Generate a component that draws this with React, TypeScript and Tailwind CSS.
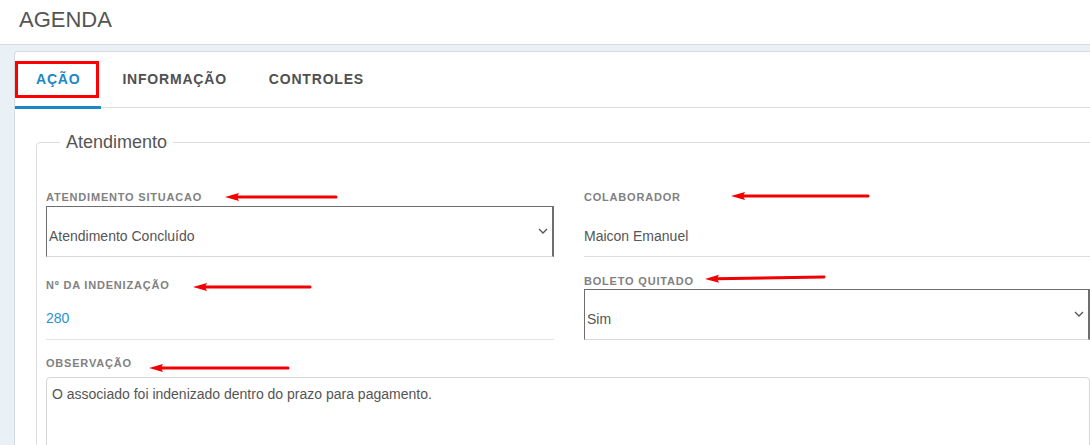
import React from "react";

// red annotation arrow pointing left
const ArrowMark = ({ width, className }: { width: number; className: string }) => (
  <svg width={width} height={10} viewBox={`0 0 ${width} 10`} className={`absolute ${className}`}>
    <polygon points="0,5 14,1 12,5 14,9" fill="#f00000" />
    <line x1={11} y1={5} x2={width - 2} y2={5} stroke="#f00000" strokeWidth={3} strokeLinecap="round" />
  </svg>
);

const Label = ({ children, className = "" }: { children: React.ReactNode; className?: string }) => (
  <div className={`text-[11px] leading-[14px] font-bold tracking-[0.8px] text-[#818181] uppercase ${className}`}>
    {children}
  </div>
);

const Chevron = () => (
  <svg width={10} height={6} viewBox="0 0 10 6" className="shrink-0">
    <polyline points="1,1 5,5 9,1" fill="none" stroke="#555" strokeWidth={1.3} />
  </svg>
);

const SelectBox = ({ value, className = "" }: { value: string; className?: string }) => (
  <div
    className={`h-[51px] flex justify-between items-start border-t border-l border-r-2 border-b border-[#6e6e6e] border-b-[#d9d9d9] pl-[2px] pr-[4px] ${className}`}
  >
    <span className="pt-[21px] text-[14px] leading-[16px] text-[#555]">{value}</span>
    <span className="self-center mt-[-2px]">
      <Chevron />
    </span>
  </div>
);

export default function App() {
  const tabs = ["AÇÃO", "INFORMAÇÃO", "CONTROLES"];

  return (
    <div className="relative w-[1090px] h-[445px] overflow-hidden bg-[#e9f1f7] font-['Liberation_Sans',Arial,sans-serif]">
      {/* Page title */}
      <header className="h-[45px] bg-white border-b border-[#d9dcde] pl-[19px] pt-[8px]">
        <h1 className="text-[22px] leading-[24px] text-[#555]">AGENDA</h1>
      </header>

      {/* Card */}
      <div className="ml-[14px] mt-[6px] w-[1100px] h-[400px] bg-white border-l border-t border-[#d3dbe1] rounded-tl-[4px]">
        {/* Tabs */}
        <div className="flex h-[56px] border-b border-[#dddddd]">
          {tabs.map((tab, idx) => (
            <div
              key={tab}
              className={
                idx === 0
                  ? "relative h-[57px] -mb-px px-[21px] flex items-center border-b-[3px] border-[#1b87c9] text-[#1b87c9] text-[14px] font-bold tracking-[0.8px]"
                  : "h-[56px] px-[21px] pb-[1px] flex items-center text-[#505050] text-[14px] font-bold tracking-[0.8px]"
              }
            >
              {tab}
              {idx === 0 && (
                <div className="absolute left-0 top-[9px] w-[84px] h-[37px] border-[3px] border-[#ff0000]" />
              )}
            </div>
          ))}
        </div>

        {/* Atendimento */}
        <fieldset className="ml-[21px] mt-[24px] w-[1080px] border border-[#dddddd] rounded-[4px] px-[9px] pb-4">
          <legend className="ml-[14px] px-[6px] text-[18px] leading-[20px] text-[#555]">Atendimento</legend>

          <div className="pt-[38px] grid grid-cols-[508px_506px] gap-x-[30px]">
            <div>
              <Label>ATENDIMENTO SITUACAO</Label>
              <SelectBox className="mt-[2px]" value="Atendimento Concluído" />
              <Label className="mt-[21px]">Nº DA INDENIZAÇÃO</Label>
              <div className="pt-[18px] pb-[13px] text-[14px] leading-[16px] text-[#2b8fd6] border-b border-[#e2e2e2]">
                280
              </div>
            </div>
            <div>
              <Label>COLABORADOR</Label>
              <div className="mt-[2px] pt-[22px] pb-[12px] text-[14px] leading-[16px] text-[#555] border-b border-[#dddddd]">
                Maicon Emanuel
              </div>
              <Label className="mt-[17px]">BOLETO QUITADO</Label>
              <SelectBox className="mt-px" value="Sim" />
            </div>
          </div>

          <Label className="mt-[16px]">OBSERVAÇÃO</Label>
          <div className="mt-[7px] w-[1044px] h-[90px] border border-[#d6d6d6] rounded-[4px] px-[5px] pt-[8px] text-[14px] leading-[16px] text-[#555]">
            O associado foi indenizado dentro do prazo para pagamento.
          </div>
        </fieldset>
      </div>

      {/* annotations */}
      <ArrowMark width={113} className="left-[225px] top-[192px]" />
      <ArrowMark width={139} className="left-[731px] top-[191px]" />
      <ArrowMark width={119} className="left-[193px] top-[282px]" />
      <ArrowMark width={121} className="left-[705px] top-[273px] rotate-[-1deg]" />
      <ArrowMark width={141} className="left-[149px] top-[363px]" />
    </div>
  );
}
